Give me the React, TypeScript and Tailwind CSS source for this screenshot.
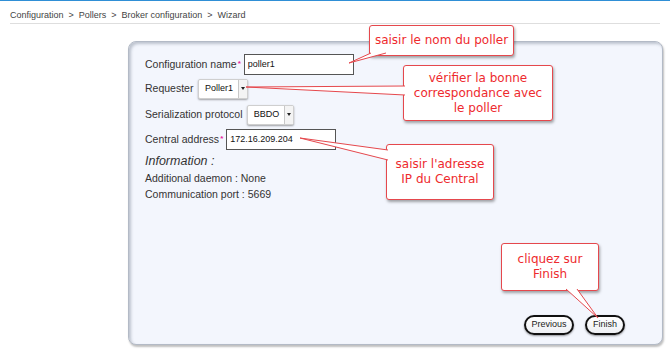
import React from 'react';

function Req() {
  return <sup className="text-[8px] font-bold text-[#e81fa0] ml-px relative top-[-1px]">*</sup>;
}

function Select({ value, width }: { value: string; width: string }) {
  return (
    <div className={`${width} h-[20px] flex items-stretch bg-white rounded-[2px] border border-[#cfcfcf] shadow-[0_1px_2px_rgba(0,0,0,0.35)] text-[9px] text-[#111]`}>
      <span className="flex-1 flex items-center justify-center">{value}</span>
      <span className="w-[9px] flex items-center justify-center border-l border-[#c8c8c8] bg-[#f4f4f4]">
        <span className="w-0 h-0 border-l-[2px] border-r-[2px] border-t-[3px] border-l-transparent border-r-transparent border-t-[#222]" />
      </span>
    </div>
  );
}

function Callout({ className, lines }: { className: string; lines: string[] }) {
  return (
    <div className={`absolute z-10 flex flex-col items-center justify-center bg-white border border-[#e5484d] rounded-[3px] shadow-[1px_2px_3px_rgba(0,0,0,0.35)] text-[#ee2a2e] text-[12px] leading-[15px] font-['DejaVu_Sans',sans-serif] ${className}`}>
      {lines.map((l) => (
        <span key={l}>{l}</span>
      ))}
    </div>
  );
}

const tails: { pts: [number, number][] }[] = [
  { pts: [[371, 53], [349, 63], [386, 53]] },
  { pts: [[405, 86], [246, 87], [405, 95]] },
  { pts: [[388, 150], [300, 138], [388, 160]] },
  { pts: [[566, 289], [598, 318], [577, 289]] },
];

export default function App() {
  return (
    <div className="relative w-[670px] h-[360px] overflow-hidden bg-white font-['Liberation_Sans',Arial,sans-serif]">
      <div className="h-px bg-[#2f8fd6]" />
      <div className="mx-[10px] pt-[9px] pb-[3px] border-b border-[#dedede] text-[9px] leading-[10px] text-[#444] flex gap-[5px]">
        <span>Configuration</span>
        <span>&gt;</span>
        <span>Pollers</span>
        <span>&gt;</span>
        <span>Broker configuration</span>
        <span>&gt;</span>
        <span>Wizard</span>
      </div>

      <div className="ml-[128px] mr-[7px] mt-[17px] h-[304px] rounded-[8px] bg-[#f3f6fd] border border-[#b3bac6] shadow-[inset_2px_2px_3px_rgba(90,100,120,0.35),1px_2px_2px_rgba(0,0,0,0.25)] pl-[16px] pt-[12px] flex flex-col text-[10.5px] text-[#333]">
        <div className="flex items-center h-[21px]">
          <span>Configuration name</span>
          <Req />
          <div className="ml-[3px] w-[110px] h-[21px] border border-[#555] bg-white flex items-center pl-[3px] text-[9px] text-[#111]">poller1</div>
        </div>
        <div className="flex items-center h-[21px] mt-[3px]">
          <span>Requester</span>
          <div className="ml-[5px]">
            <Select value="Poller1" width="w-[50px]" />
          </div>
        </div>
        <div className="flex items-center h-[21px] mt-[5px]">
          <span>Serialization protocol</span>
          <div className="ml-[5px]">
            <Select value="BBDO" width="w-[47px]" />
          </div>
        </div>
        <div className="flex items-center h-[21px] mt-[4px]">
          <span>Central address</span>
          <Req />
          <div className="ml-[3px] w-[110px] h-[21px] border border-[#555] bg-white flex items-center pl-[3px] text-[9px] text-[#111]">172.16.209.204</div>
        </div>
        <div className="mt-[4px] italic text-[12.5px] leading-[15px]">Information :</div>
        <div className="mt-[1px] leading-[16px]">Additional daemon : None</div>
        <div className="leading-[16px]">Communication port : 5669</div>

        <div className="mt-auto mb-[9px] mr-[37px] flex justify-end gap-[11px] text-[9px] text-[#222]">
          <button className="w-[50px] h-[20px] rounded-full border-2 border-[#111] bg-gradient-to-b from-white to-[#eef0f4] shadow-[0_1px_2px_rgba(0,0,0,0.4)]">Previous</button>
          <button className="w-[40px] h-[20px] rounded-full border-2 border-[#111] bg-gradient-to-b from-white to-[#eef0f4] shadow-[0_1px_2px_rgba(0,0,0,0.4)]">Finish</button>
        </div>
      </div>

      <Callout className="left-[369px] top-[25px] w-[145px] h-[31px]" lines={['saisir le nom du poller']} />
      <Callout className="left-[403px] top-[65px] w-[150px] h-[56px]" lines={['vérifier la bonne', 'correspondance avec', 'le poller']} />
      <Callout className="left-[386px] top-[144px] w-[108px] h-[56px]" lines={["saisir l'adresse", 'IP du Central']} />
      <Callout className="left-[501px] top-[243px] w-[98px] h-[48px]" lines={['cliquez sur', 'Finish']} />

      <svg className="absolute inset-0 z-20 pointer-events-none" width="670" height="360">
        {tails.map((t, i) => {
          const [a, p, b] = t.pts;
          return (
            <g key={i}>
              <polygon points={`${a[0]},${a[1]} ${p[0]},${p[1]} ${b[0]},${b[1]}`} fill="white" />
              <polyline points={`${a[0]},${a[1]} ${p[0]},${p[1]} ${b[0]},${b[1]}`} fill="none" stroke="#e5484d" strokeWidth="1" />
            </g>
          );
        })}
      </svg>
    </div>
  );
}
